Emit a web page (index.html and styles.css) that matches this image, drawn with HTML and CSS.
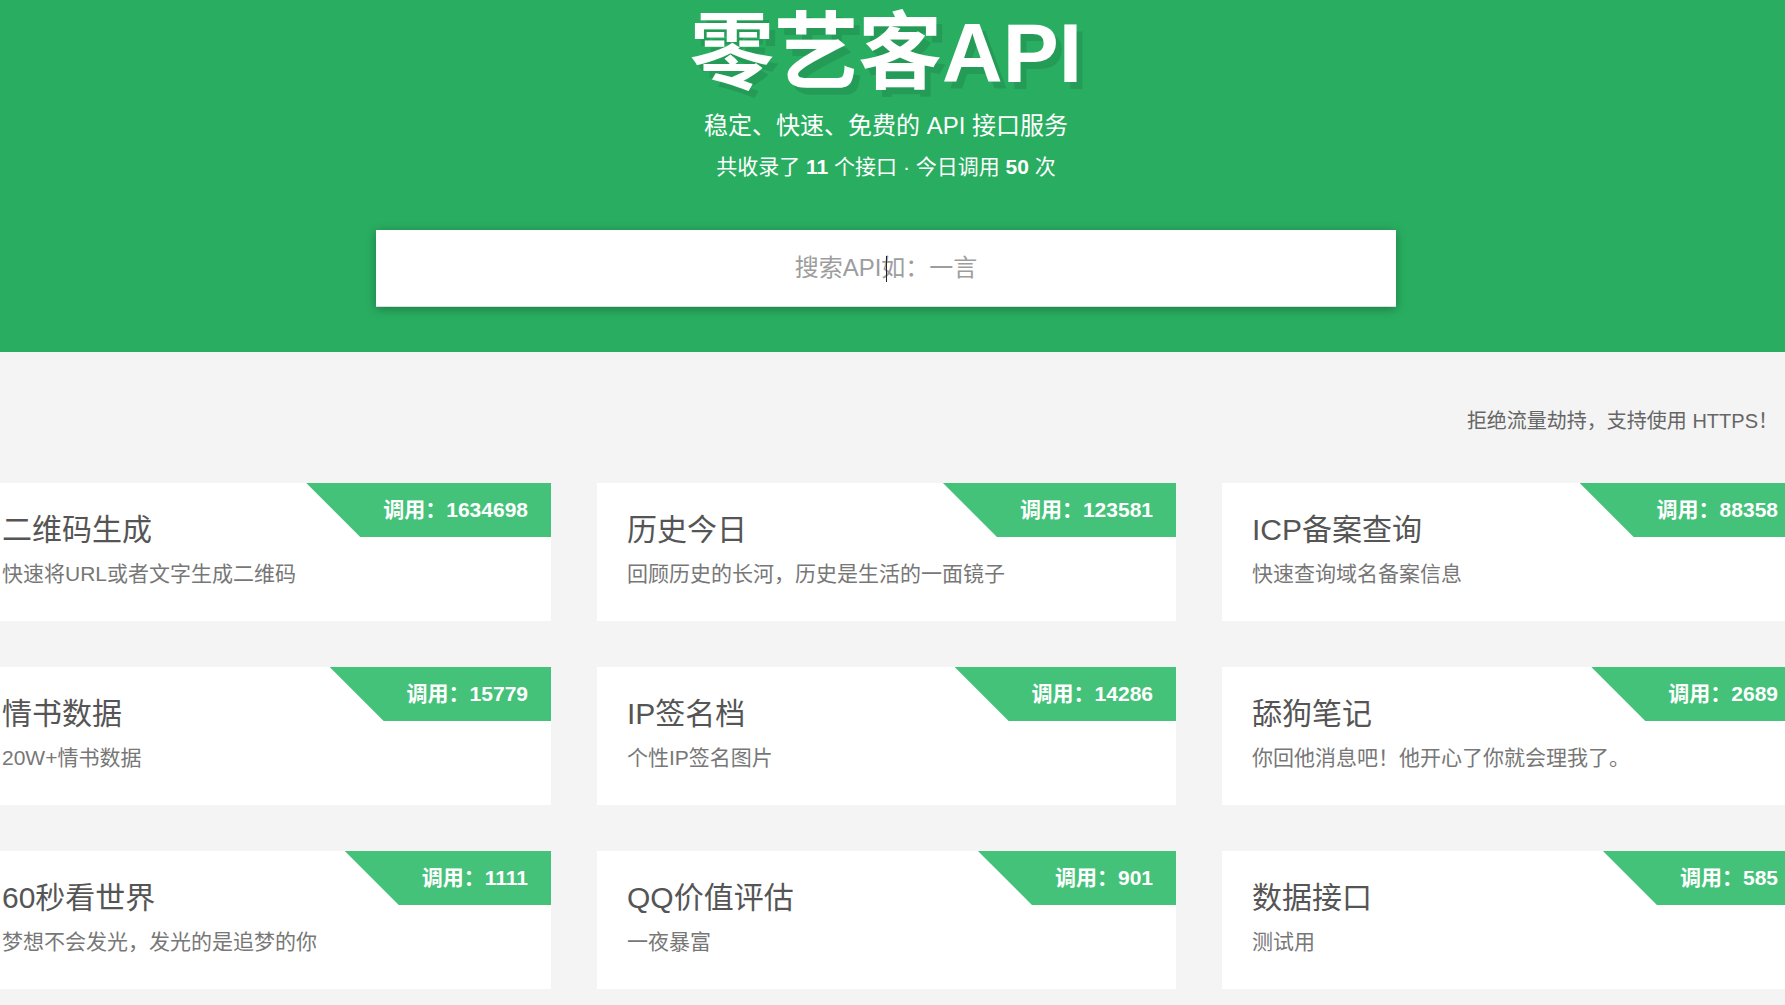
FILE: index.html
```html
<!DOCTYPE html>
<html lang="zh-CN">
<head>
<meta charset="utf-8">
<title>零艺客API</title>
<link rel="stylesheet" href="styles.css">
</head>
<body>
<header class="hero">
  <div class="hero-inner">
    <h1 class="logo">零艺客API</h1>
    <p class="tagline">稳定、快速、免费的 API 接口服务</p>
    <p class="stats">共收录了 <b>11</b> 个接口 · 今日调用 <b>50</b> 次</p>
    <div class="search">
      <input class="search-input" type="text" placeholder="搜索API如：一言">
      <span class="caret"></span>
    </div>
  </div>
</header>
<main class="main">
  <div class="container">
    <p class="notice">拒绝流量劫持，支持使用 HTTPS！</p>
    <div class="grid">
      <a class="card"><span class="badge">调用：1634698</span><h2 class="card-title">二维码生成</h2><p class="card-desc">快速将URL或者文字生成二维码</p></a>
      <a class="card"><span class="badge">调用：123581</span><h2 class="card-title">历史今日</h2><p class="card-desc">回顾历史的长河，历史是生活的一面镜子</p></a>
      <a class="card"><span class="badge">调用：88358</span><h2 class="card-title">ICP备案查询</h2><p class="card-desc">快速查询域名备案信息</p></a>
      <a class="card"><span class="badge">调用：15779</span><h2 class="card-title">情书数据</h2><p class="card-desc">20W+情书数据</p></a>
      <a class="card"><span class="badge">调用：14286</span><h2 class="card-title">IP签名档</h2><p class="card-desc">个性IP签名图片</p></a>
      <a class="card"><span class="badge">调用：2689</span><h2 class="card-title">舔狗笔记</h2><p class="card-desc">你回他消息吧！他开心了你就会理我了。</p></a>
      <a class="card"><span class="badge">调用：1111</span><h2 class="card-title">60秒看世界</h2><p class="card-desc">梦想不会发光，发光的是追梦的你</p></a>
      <a class="card"><span class="badge">调用：901</span><h2 class="card-title">QQ价值评估</h2><p class="card-desc">一夜暴富</p></a>
      <a class="card"><span class="badge">调用：585</span><h2 class="card-title">数据接口</h2><p class="card-desc">测试用</p></a>
    </div>
  </div>
</main>
</body>
</html>
```
FILE: styles.css
```css
html, body {
  margin: 0;
  padding: 0;
  overflow: hidden;
}
body {
  background: #f4f4f4;
  font-family: "Liberation Sans", "Noto Sans CJK SC", sans-serif;
  color: #555;
}
.hero {
  background: #29ae61;
  height: 352px;
  color: #fff;
}
.hero-inner {
  margin-right: 13px;
  text-align: center;
  padding-top: 3px;
}
.logo {
  margin: 0;
  font-size: 84px;
  line-height: 101px;
  font-weight: 700;
  text-shadow: 6px 7px 0 rgba(0, 0, 0, 0.1);
}
.tagline {
  margin: 4px 0 0;
  font-size: 24px;
  line-height: 36px;
}
.stats {
  margin: 8px 0 0;
  font-size: 21px;
  line-height: 30px;
}
.stats b {
  font-weight: 700;
}
.search {
  position: relative;
  width: 1020px;
  height: 77px;
  margin: 48px auto 0;
  background: #fff;
  box-shadow: 0 2px 10px rgba(0, 0, 0, 0.3);
  border-bottom: 1px solid #ddd;
  box-sizing: border-box;
}
.search-input {
  display: block;
  width: 100%;
  height: 100%;
  border: 0;
  outline: 0;
  background: transparent;
  text-align: center;
  font-family: "Liberation Sans", "Noto Sans CJK SC", sans-serif;
  font-size: 24px;
  color: #333;
  padding: 0;
}
.search-input::placeholder {
  color: #9d9d9d;
}
.caret {
  position: absolute;
  left: 50%;
  top: 26px;
  width: 1px;
  height: 26px;
  background: #222;
}
.main {
  overflow: hidden;
}
.container {
  width: 1829px;
  margin-left: -28px;
}
.notice {
  margin: 54px 0 0;
  padding-right: 23px;
  text-align: right;
  font-size: 20px;
  line-height: 30px;
  color: #666;
}
.grid {
  display: grid;
  grid-template-columns: repeat(3, 579px);
  column-gap: 46px;
  row-gap: 46px;
  margin-top: 47px;
}
.card {
  position: relative;
  display: block;
  height: 138px;
  background: #fff;
  padding: 27px 30px 0;
  box-sizing: border-box;
  overflow: hidden;
}
.badge {
  position: absolute;
  top: 0;
  right: 0;
  height: 54px;
  line-height: 54px;
  padding: 0 23px 0 77px;
  background: #45c27a;
  color: #fff;
  font-size: 21px;
  font-weight: 700;
  clip-path: polygon(0 0, 100% 0, 100% 100%, 54px 100%);
}
.card-title {
  margin: 0;
  font-size: 30px;
  line-height: 40px;
  font-weight: 400;
  color: #555;
}
.card-desc {
  margin: 9px 0 0;
  font-size: 21px;
  line-height: 30px;
  color: #777;
}
```
